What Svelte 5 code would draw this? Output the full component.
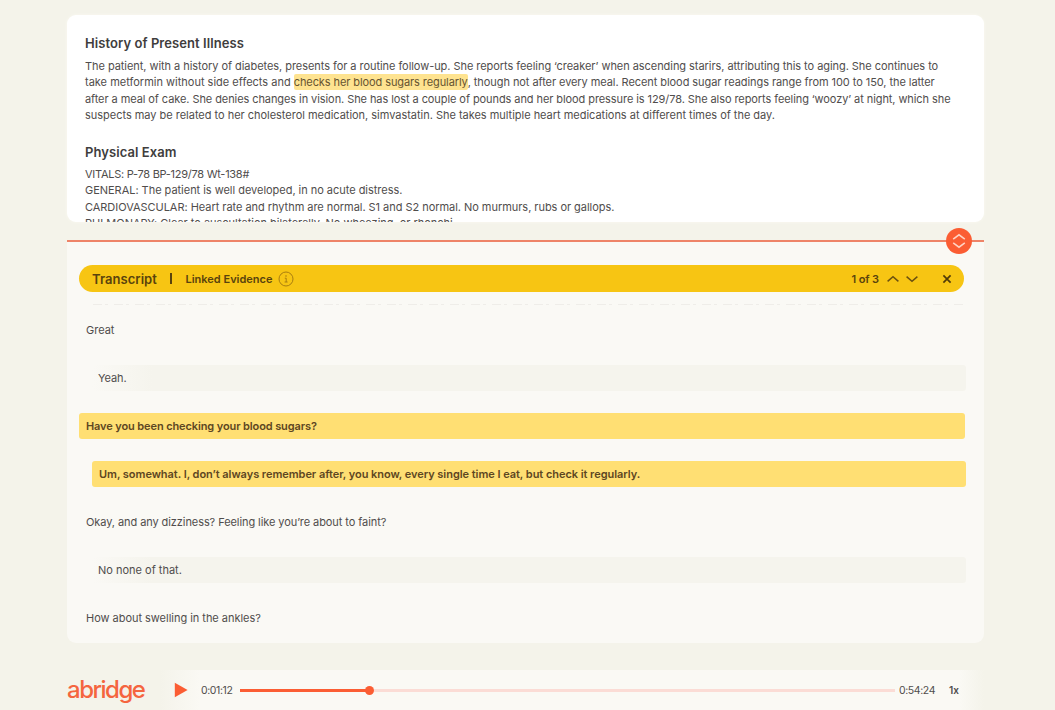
<script>
  let index = 1;
  let total = 3;
  let progress = 19.8;

  const history = [
    { text: "The patient, with a history of diabetes, presents for a routine follow-up. She reports feeling ‘creaker’ when ascending starirs, attributing this to aging. She continues to", spacing: -0.053 },
    { text: "take metformin without side effects and ", mark: "checks her blood sugars regularly", rest: ", though not after every meal. Recent blood sugar readings range from 100 to 150, the latter", spacing: 0 },
    { text: "after a meal of cake. She denies changes in vision. She has lost a couple of pounds and her blood pressure is 129/78. She also reports feeling ‘woozy’ at night, which she", spacing: -0.08 },
    { text: "suspects may be related to her cholesterol medication, simvastatin. She takes multiple heart medications at different times of the day.", spacing: -0.022 }
  ];

  const exam = [
    { text: "VITALS: P-78 BP-129/78 Wt-138#", spacing: -0.27 },
    { text: "GENERAL: The patient is well developed, in no acute distress.", spacing: -0.03 },
    { text: "CARDIOVASCULAR: Heart rate and rhythm are normal. S1 and S2 normal. No murmurs, rubs or gallops.", spacing: -0.04 },
    { text: "PULMONARY: Clear to auscultation bilaterally. No wheezing, or rhonchi.", spacing: -0.02 }
  ];

  const turns = [
    { text: "Great", spacing: 0 },
    { text: "Yeah.", reply: true, spacing: -0.1 },
    { text: "Have you been checking your blood sugars?", linked: true, spacing: -0.11 },
    { text: "Um, somewhat. I, don’t always remember after, you know, every single time I eat, but check it regularly.", reply: true, linked: true, spacing: -0.045 },
    { text: "Okay, and any dizziness? Feeling like you’re about to faint?", spacing: -0.08 },
    { text: "No none of that.", reply: true, spacing: 0 },
    { text: "How about swelling in the ankles?", spacing: -0.03 }
  ];
</script>

<main>
  <section class="note">
    <h2>History of Present Illness</h2>
    {#each history as line}
      <p style="letter-spacing: {line.spacing}px">{line.text}{#if line.mark}<mark>{line.mark}</mark><span class="rest">{line.rest}</span>{/if}</p>
    {/each}
    <h2 class="second">Physical Exam</h2>
    {#each exam as line}
      <p style="letter-spacing: {line.spacing}px">{line.text}</p>
    {/each}
  </section>

  <div class="divider">
    <button class="handle" aria-label="Resize">
      <svg width="26" height="26" viewBox="0 0 26 26">
        <path d="M7.2 11.2 L13 6.8 L18.8 11.2 M7.2 14.8 L13 19.2 L18.8 14.8" />
      </svg>
    </button>
  </div>

  <section class="transcript">
    <header>
      <span class="title">Transcript</span>
      <span class="bar"></span>
      <span class="linked-title">Linked Evidence</span>
      <svg class="info" width="16" height="16" viewBox="0 0 16 16">
        <circle cx="8" cy="8" r="7" />
        <path d="M6.8 7.2 H8.2 V11 M6.6 11 H9.6" />
        <circle class="dot" cx="8" cy="5" r="0.8" />
      </svg>
      <span class="count">{index} of {total}</span>
      <svg class="arrow up" width="12" height="8" viewBox="0 0 12 8"><path d="M0.6 6.4 L6 1.8 L11.4 6.4" /></svg>
      <svg class="arrow down" width="12" height="8" viewBox="0 0 12 8"><path d="M0.6 1.6 L6 6.2 L11.4 1.6" /></svg>
      <svg class="close" width="10" height="10" viewBox="0 0 10 10"><path d="M1.4 1.4 L8.6 8.6 M8.6 1.4 L1.4 8.6" /></svg>
    </header>
    <div class="cutoff"></div>
    <div class="turns">
      {#each turns as turn}
        <div class="turn" class:reply={turn.reply} class:linked={turn.linked}>
          <span style="letter-spacing: {turn.spacing}px">{turn.text}</span>
        </div>
      {/each}
    </div>
  </section>

  <footer>
    <div class="logo">abridge</div>
    <div class="player">
      <svg class="play" width="14" height="16" viewBox="0 0 14 16"><path d="M0.8 0.8 L13.6 8 L0.8 15.2 Z" /></svg>
      <span class="time">0:01:12</span>
      <div class="track">
        <div class="fill" style="width: {progress}%"><i></i></div>
      </div>
      <span class="time">0:54:24</span>
      <span class="speed">1x</span>
    </div>
  </footer>
</main>

<style>
  :global(body) {
    background: #f4f3ea;
  }

  main {
    box-sizing: border-box;
    width: 1055px;
    height: 710px;
    padding: 15px 71px 0 67px;
    overflow: hidden;
    font-family: "Inter", "Liberation Sans", sans-serif;
    font-size: 11px;
    color: #504d4c;
  }

  .note {
    box-sizing: border-box;
    height: 207px;
    padding: 19px 0 0 18px;
    overflow: hidden;
    background: #fff;
    border-radius: 9px;
    box-shadow: 0 0 3px #fbfaf3;
  }

  h2 {
    margin: 0 0 4.5px;
    font-size: 13px;
    line-height: 19px;
    font-weight: 600;
    letter-spacing: 0.07px;
    color: #403d3d;
  }

  h2.second {
    margin-top: 19.5px;
    margin-bottom: 3.5px;
  }

  p {
    margin: 0;
    height: 16.5px;
    line-height: 16.5px;
    white-space: pre;
  }

  mark {
    padding: 1px 0;
    color: #665331;
    background: #fee390;
    border-radius: 2px;
    letter-spacing: -0.09px;
  }

  .rest {
    letter-spacing: -0.07px;
  }

  .divider {
    display: flex;
    align-items: center;
    justify-content: flex-end;
    height: 38px;
    background: linear-gradient(transparent 18px, #ee8468 18px, #ee8468 20px, #faf9f4 20px);
  }

  .handle {
    width: 26px;
    height: 26px;
    margin-right: 12px;
    padding: 0;
    border: 0;
    border-radius: 50%;
    background: #fb5d33;
  }

  svg {
    display: block;
    fill: none;
  }

  .handle path {
    stroke: #ffd3c4;
    stroke-width: 1.5;
  }

  .transcript {
    box-sizing: border-box;
    height: 383px;
    padding: 5px 17px 0 12px;
    background: #faf9f5;
    border-radius: 0 0 9px 9px;
  }

  header {
    display: flex;
    align-items: center;
    height: 27px;
    margin-right: 3px;
    padding: 0 12px 0 13px;
    border-radius: 14px;
    background: #f7c513;
    color: #59430d;
    font-weight: 600;
  }

  .title {
    width: 78px;
    font-size: 13px;
    letter-spacing: 0.05px;
  }

  .bar {
    width: 1.5px;
    height: 11px;
    background: #59430d;
  }

  .linked-title {
    width: 92px;
    margin-left: 14px;
    white-space: nowrap;
  }

  .info {
    stroke: #a97e10;
    stroke-width: 1;
  }

  .info .dot {
    fill: #a97e10;
    stroke: none;
  }

  .count {
    margin-left: auto;
    margin-right: 8px;
    letter-spacing: -0.1px;
  }

  .arrow, .close {
    stroke: #6b5010;
    stroke-width: 1.5;
  }

  .down {
    margin-left: 7px;
  }

  .close {
    margin-left: 24px;
    stroke: #503b09;
    stroke-width: 1.7;
  }

  .cutoff {
    height: 1px;
    margin: 12px 4px 12px 14px;
    background: repeating-linear-gradient(90deg, #efede9 0 9px, transparent 9px 12px, #efede9 12px 15px, transparent 15px 21px);
  }

  .turns {
    display: flex;
    flex-direction: column;
    gap: 22px;
  }

  .turn {
    height: 26px;
    margin-right: 2px;
    padding-left: 7px;
    border-radius: 3px;
    line-height: 26px;
    white-space: nowrap;
  }

  .reply {
    margin-left: 13px;
    margin-right: 1px;
    padding-left: 6px;
    background: linear-gradient(90deg, #faf9f5, #f5f4ed 60px);
  }

  .linked {
    background: #ffdf73;
    color: #5d4622;
    font-weight: 600;
  }

  .linked.reply {
    padding-left: 7px;
  }

  footer {
    display: flex;
    align-items: center;
    height: 40px;
    margin-top: 27px;
  }

  .logo {
    width: 93px;
    font-size: 24px;
    line-height: 30px;
    font-weight: 500;
    letter-spacing: -1.5px;
    color: #f5653f;
  }

  .player {
    display: flex;
    flex: 1;
    align-items: center;
    height: 40px;
    padding-left: 14px;
    background: linear-gradient(90deg, #f4f3ea, #faf9f4 40px, #faf9f4 800px, #f4f3ea);
  }

  .play {
    fill: #fb5d33;
    margin-right: 13px;
  }

  .time {
    width: 36px;
    font-size: 10.5px;
    letter-spacing: -0.4px;
  }

  .track {
    width: 655px;
    height: 3px;
    margin: 0 4px 0 3px;
    background: #fbdcd5;
  }

  .fill {
    display: flex;
    align-items: center;
    justify-content: flex-end;
    height: 3px;
    background: #fb5d33;
  }

  .fill i {
    flex: none;
    width: 9px;
    height: 9px;
    margin-right: -4px;
    border-radius: 50%;
    background: #fb5d33;
  }

  .speed {
    margin-left: 14px;
    font-size: 10px;
    font-weight: 600;
  }
</style>
